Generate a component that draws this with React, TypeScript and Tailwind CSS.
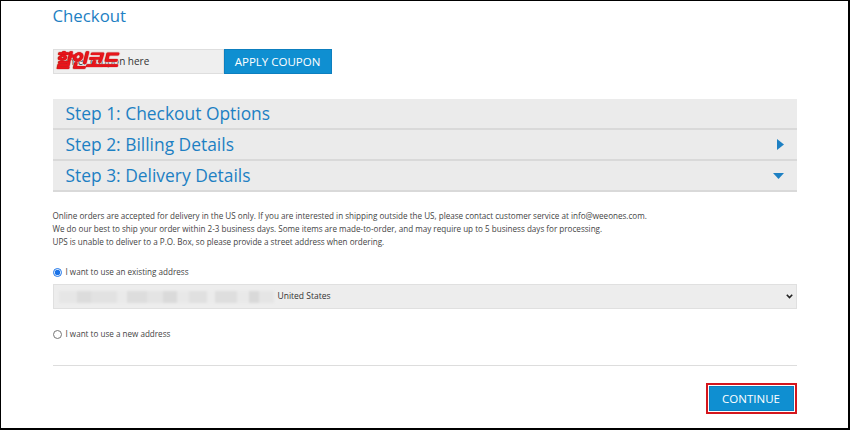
import { useState } from "react";

const blurBlocks = [
  { w: 18, c: "bg-[#e6e6e6]" },
  { w: 14, c: "bg-[#dcdcdc]" },
  { w: 26, c: "bg-[#e2e2e2]" },
  { w: 10, c: "bg-[#eaeaea]" },
  { w: 20, c: "bg-[#dddddd]" },
  { w: 16, c: "bg-[#e4e4e4]" },
  { w: 14, c: "bg-[#dadada]" },
  { w: 12, c: "bg-[#e8e8e8]" },
  { w: 18, c: "bg-[#e0e0e0]" },
  { w: 8, c: "bg-[#ebebeb]" },
  { w: 22, c: "bg-[#dedede]" },
  { w: 12, c: "bg-[#e9e9e9]" },
  { w: 10, c: "bg-[#d9d9d9]" },
  { w: 15, c: "bg-[#e5e5e5]" },
];

function Step({ title, icon }: { title: string; icon?: "right" | "down" }) {
  return (
    <div className="flex h-[31px] items-center justify-between border-b-2 border-[#d9d9d9] bg-[#ebebeb] pl-[13px] pr-[13px]">
      <span className="text-[17.4px] leading-none text-[#1d80c3]">{title}</span>
      {icon === "right" && (
        <svg width="7" height="11" viewBox="0 0 7 11">
          <path d="M0 0 L7 5.5 L0 11 Z" fill="#1d80c3" />
        </svg>
      )}
      {icon === "down" && (
        <svg width="11" height="6" viewBox="0 0 11 6">
          <path d="M0 0 L11 0 L5.5 6 Z" fill="#1d80c3" />
        </svg>
      )}
    </div>
  );
}

export default function App() {
  const [addr, setAddr] = useState("existing");

  return (
    <div
      className="h-[430px] w-[850px] overflow-hidden border-t border-l border-r-2 border-b-2 border-black bg-white text-[#444]"
      style={{ fontFamily: '"Open Sans", "Noto Sans CJK KR", sans-serif' }}
    >
      <div className="mx-auto w-[744px]">
        <h1 className="pt-[4px] text-[16.8px] leading-[22px] text-[#1d80c3]">Checkout</h1>

        {/* coupon */}
        <div className="mt-[22px] flex h-[25px]">
          <div className="relative flex w-[171px] items-center border border-[#dedede] bg-[#efefef] pl-[9px] text-[10px] text-[#333]">
            Enter coupon here
            <span
              className="absolute left-[1px] top-[1px] text-[18.5px] font-black italic leading-none tracking-[-1.5px] text-[#e8141b]"
              style={{ WebkitTextStroke: "1.2px #fff", paintOrder: "stroke fill", textShadow: "0 0 1px #a00, 0 0 1px #a00" }}
            >
              할인코드
            </span>
          </div>
          <button className="flex w-[108px] items-center justify-center border border-[#0d7fbf] bg-[#0f8fd1] text-[11.5px] text-white">
            APPLY COUPON
          </button>
        </div>

        {/* steps */}
        <div className="mt-[25px]">
          <Step title="Step 1: Checkout Options" />
          <Step title="Step 2: Billing Details" icon="right" />
          <Step title="Step 3: Delivery Details" icon="down" />
        </div>

        <div className="mt-[17px] text-[8.1px] leading-[13px] text-[#444]">
          <p>
            Online orders are accepted for delivery in the US only. If you are interested in shipping outside the US, please
            contact customer service at info@weeones.com.
          </p>
          <p>
            We do our best to ship your order within 2-3 business days. Some items are made-to-order, and may require up to 5
            business days for processing.
          </p>
          <p>UPS is unable to deliver to a P.O. Box, so please provide a street address when ordering.</p>
        </div>

        <label className="mt-[18px] flex items-center gap-[4px] text-[8.1px] leading-[12px]">
          <input
            type="radio"
            name="addr"
            checked={addr === "existing"}
            onChange={() => setAddr("existing")}
            className="m-0 h-[9px] w-[9px] accent-[#1a73e8]"
          />
          I want to use an existing address
        </label>

        <div className="mt-[6px] flex h-[25px] items-center justify-between border border-[#e0e0e0] bg-[#ededed] pl-[5px] pr-[3px]">
          <div className="flex items-center">
            <div className="flex h-[14px] items-center blur-[1px]">
              {blurBlocks.map((b, i) => (
                <div key={i} className={`h-[12px] ${b.c}`} style={{ width: b.w }} />
              ))}
            </div>
            <span className="ml-[4px] text-[8.5px] text-[#333]">United States</span>
          </div>
          <svg width="7" height="5" viewBox="0 0 7 5">
            <path d="M0.8 0.8 L3.5 3.6 L6.2 0.8" fill="none" stroke="#222" strokeWidth="1.6" />
          </svg>
        </div>

        <label className="mt-[19px] flex items-center gap-[4px] text-[8.1px] leading-[12px]">
          <input
            type="radio"
            name="addr"
            checked={addr === "new"}
            onChange={() => setAddr("new")}
            className="m-0 h-[9px] w-[9px] accent-[#1a73e8]"
          />
          I want to use a new address
        </label>

        <div className="mt-[25px] border-t border-[#dddddd]" />

        <div className="mt-[17px] flex justify-end">
          <div className="border-2 border-[#d4161d] p-[1px]">
            <button className="flex h-[25px] w-[85px] items-center justify-center border border-[#0d7fbf] bg-[#0f8fd1] text-[11.5px] text-white">
              CONTINUE
            </button>
          </div>
        </div>
      </div>
    </div>
  );
}
